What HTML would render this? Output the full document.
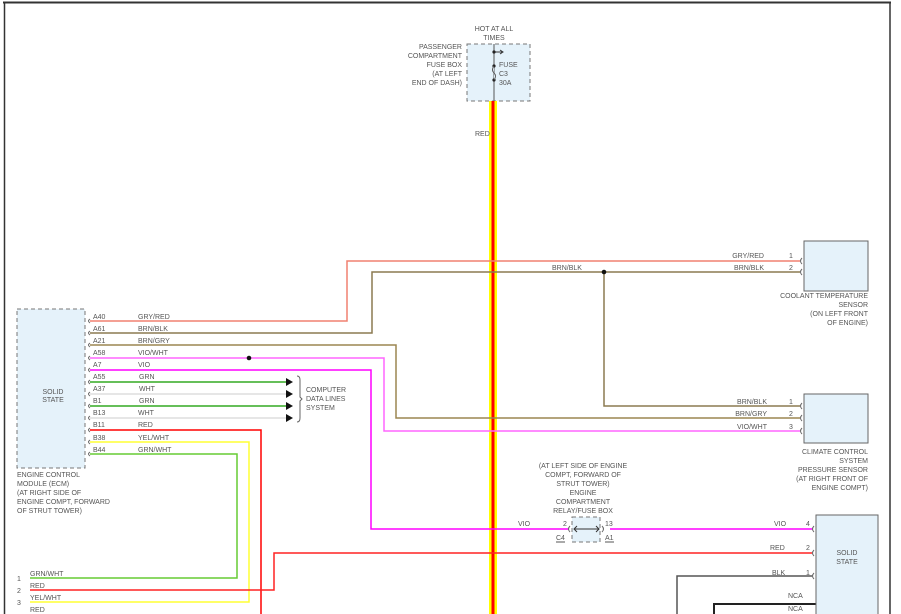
<!DOCTYPE html>
<html><head><style>
html,body{margin:0;padding:0;background:#fff;}
svg{display:block;}
text{font-family:"Liberation Sans",sans-serif;font-size:7px;fill:#555;}
</style></head><body>
<svg width="901" height="614" viewBox="0 0 901 614" xmlns="http://www.w3.org/2000/svg">
<rect x="0" y="0" width="901" height="614" fill="#fff"/>
<line x1="3" y1="2.5" x2="891" y2="2.5" stroke="#333" stroke-width="2"/>
<line x1="4.5" y1="2" x2="4.5" y2="614" stroke="#333" stroke-width="1.5"/>
<line x1="890" y1="2" x2="890" y2="614" stroke="#333" stroke-width="1.5"/>

<!-- fuse box -->
<rect x="467" y="44" width="63" height="57" fill="#e5f2fa" stroke="#777" stroke-dasharray="4,3"/>
<line x1="494" y1="44" x2="494" y2="101" stroke="#555"/>
<path d="M494 52 h8 M500 50 l3 2 l-3 2" stroke="#333" fill="none"/>
<circle cx="494" cy="52" r="1.6" fill="#222"/><circle cx="494" cy="66" r="1.6" fill="#222"/><circle cx="494" cy="80" r="1.6" fill="#222"/>
<path d="M494 66 q-3 4 0 7 q3 3 0 7" stroke="#555" fill="#e5f2fa"/>
<text x="494" y="31" text-anchor="middle">HOT AT ALL</text>
<text x="494" y="40" text-anchor="middle">TIMES</text>
<text x="462" y="49" text-anchor="end">PASSENGER</text>
<text x="462" y="58" text-anchor="end">COMPARTMENT</text>
<text x="462" y="67" text-anchor="end">FUSE BOX</text>
<text x="462" y="76" text-anchor="end">(AT LEFT</text>
<text x="462" y="85" text-anchor="end">END OF DASH)</text>
<text x="499" y="67">FUSE</text><text x="499" y="76">C3</text><text x="499" y="85">30A</text>
<line x1="493" y1="101" x2="493" y2="614" stroke="#ffff00" stroke-width="8"/>
<line x1="493" y1="101" x2="493" y2="614" stroke="#ff0000" stroke-width="3"/>
<text x="475" y="136">RED</text>

<!-- ECM -->
<rect x="17" y="309" width="68" height="159" fill="#e5f2fa" stroke="#777" stroke-dasharray="4,3"/>
<text x="53" y="394" text-anchor="middle">SOLID</text>
<text x="53" y="402" text-anchor="middle">STATE</text>
<text x="17" y="477">ENGINE CONTROL</text>
<text x="17" y="486">MODULE (ECM)</text>
<text x="17" y="495">(AT RIGHT SIDE OF</text>
<text x="17" y="504">ENGINE COMPT, FORWARD</text>
<text x="17" y="513">OF STRUT TOWER)</text>

<g fill="none" stroke-width="1.5">
<path d="M90 321 H347 V261 H800" stroke="#f08070"/>
<path d="M90 333 H372 V272 H800" stroke="#8b7a50"/>
<path d="M604 272 V406 H800" stroke="#8b7a50"/>
<path d="M90 345 H396 V418 H800" stroke="#9b8550"/>
<path d="M90 358 H384 V431 H800" stroke="#ff66ff"/>
<path d="M90 370 H371 V529 H569" stroke="#ff00ff"/>
<path d="M610 529 H812" stroke="#ff00ff"/>
<path d="M90 382 H287" stroke="#33aa22"/>
<path d="M90 394 H287" stroke="#ddd"/>
<path d="M90 406 H287" stroke="#33aa22"/>
<path d="M90 418 H287" stroke="#ddd"/>
<path d="M90 430 H261 V614" stroke="#ff0000"/>
<path d="M90 442 H249 V602 H30" stroke="#ffff33"/>
<path d="M90 454 H237 V578 H30" stroke="#66cc33"/>
<path d="M30 590 H274 V553 H812" stroke="#ff2222"/>
<path d="M812 576 H677 V614" stroke="#555"/>
<path d="M816 604 H714 V614" stroke="#222" stroke-width="2"/>
</g>
<g fill="#111">
<path d="M286 378 l7 4 l-7 4z"/><path d="M286 390 l7 4 l-7 4z"/><path d="M286 402 l7 4 l-7 4z"/><path d="M286 414 l7 4 l-7 4z"/>
<circle cx="249" cy="358" r="2.3"/><circle cx="604" cy="272" r="2.3"/>
</g>
<path d="M297 376 q3 0 3 4 v17 l2 2 l-2 2 v17 q0 4 -3 4" stroke="#666" fill="none"/>
<text x="306" y="392">COMPUTER</text><text x="306" y="401">DATA LINES</text><text x="306" y="410">SYSTEM</text>
<g stroke="#666" fill="none">
<path d="M90 319 q-3 2 0 4 M90 331 q-3 2 0 4 M90 343 q-3 2 0 4 M90 356 q-3 2 0 4 M90 368 q-3 2 0 4 M90 380 q-3 2 0 4 M90 392 q-3 2 0 4 M90 404 q-3 2 0 4 M90 416 q-3 2 0 4 M90 428 q-3 2 0 4 M90 440 q-3 2 0 4 M90 452 q-3 2 0 4"/>
<path d="M802 258 q-3 3 0 6 M802 269 q-3 3 0 6 M802 403 q-3 3 0 6 M802 415 q-3 3 0 6 M802 428 q-3 3 0 6 M814 526 q-3 3 0 6 M814 550 q-3 3 0 6 M814 573 q-3 3 0 6"/>
</g>
<g>
<text x="93" y="319">A40</text><text x="138" y="319">GRY/RED</text>
<text x="93" y="331">A61</text><text x="138" y="331">BRN/BLK</text>
<text x="93" y="343">A21</text><text x="138" y="343">BRN/GRY</text>
<text x="93" y="355">A58</text><text x="138" y="355">VIO/WHT</text>
<text x="93" y="367">A7</text><text x="138" y="367">VIO</text>
<text x="93" y="379">A55</text><text x="139" y="379">GRN</text>
<text x="93" y="391">A37</text><text x="139" y="391">WHT</text>
<text x="93" y="403">B1</text><text x="139" y="403">GRN</text>
<text x="93" y="415">B13</text><text x="138" y="415">WHT</text>
<text x="93" y="427">B11</text><text x="138" y="427">RED</text>
<text x="93" y="440">B38</text><text x="138" y="440">YEL/WHT</text>
<text x="93" y="452">B44</text><text x="138" y="452">GRN/WHT</text>
</g>

<!-- coolant sensor -->
<rect x="804" y="241" width="64" height="50" fill="#e5f2fa" stroke="#666"/>
<text x="764" y="258" text-anchor="end">GRY/RED</text><text x="789" y="258">1</text>
<text x="552" y="270">BRN/BLK</text>
<text x="764" y="270" text-anchor="end">BRN/BLK</text><text x="789" y="270">2</text>
<text x="868" y="298" text-anchor="end">COOLANT TEMPERATURE</text>
<text x="868" y="307" text-anchor="end">SENSOR</text>
<text x="868" y="316" text-anchor="end">(ON LEFT FRONT</text>
<text x="868" y="325" text-anchor="end">OF ENGINE)</text>

<!-- climate -->
<rect x="804" y="394" width="64" height="49" fill="#e5f2fa" stroke="#666"/>
<text x="767" y="404" text-anchor="end">BRN/BLK</text><text x="789" y="404">1</text>
<text x="767" y="416" text-anchor="end">BRN/GRY</text><text x="789" y="416">2</text>
<text x="767" y="429" text-anchor="end">VIO/WHT</text><text x="789" y="429">3</text>
<text x="868" y="454" text-anchor="end">CLIMATE CONTROL</text>
<text x="868" y="463" text-anchor="end">SYSTEM</text>
<text x="868" y="472" text-anchor="end">PRESSURE SENSOR</text>
<text x="868" y="481" text-anchor="end">(AT RIGHT FRONT OF</text>
<text x="868" y="490" text-anchor="end">ENGINE COMPT)</text>

<!-- relay box -->
<text x="583" y="468" text-anchor="middle">(AT LEFT SIDE OF ENGINE</text>
<text x="583" y="477" text-anchor="middle">COMPT, FORWARD OF</text>
<text x="583" y="486" text-anchor="middle">STRUT TOWER)</text>
<text x="583" y="495" text-anchor="middle">ENGINE</text>
<text x="583" y="504" text-anchor="middle">COMPARTMENT</text>
<text x="583" y="513" text-anchor="middle">RELAY/FUSE BOX</text>
<rect x="572" y="517" width="28" height="25" fill="#e5f2fa" stroke="#777" stroke-dasharray="4,3"/>
<path d="M574 529 h25 M577 526 l-3 3 l3 3 M596 526 l3 3 l-3 3" stroke="#333" fill="none"/>
<path d="M570 526 q-3 3 0 6 M602 526 q3 3 0 6" stroke="#666" fill="none"/>
<text x="563" y="526">2</text><text x="605" y="526">13</text>
<text x="556" y="540">C4</text><text x="605" y="540">A1</text>
<path d="M556 542 h9 M605 542 h9" stroke="#555"/>
<text x="518" y="526">VIO</text>
<text x="774" y="526">VIO</text><text x="806" y="526">4</text>
<text x="770" y="550">RED</text><text x="806" y="550">2</text>
<text x="772" y="575">BLK</text><text x="806" y="575">1</text>
<text x="788" y="598">NCA</text><text x="788" y="611">NCA</text>

<!-- bottom right module -->
<rect x="816" y="515" width="62" height="105" fill="#e5f2fa" stroke="#666"/>
<text x="847" y="555" text-anchor="middle">SOLID</text>
<text x="847" y="564" text-anchor="middle">STATE</text>

<!-- bottom left -->
<text x="17" y="581">1</text><text x="30" y="576">GRN/WHT</text>
<text x="17" y="593">2</text><text x="30" y="588">RED</text>
<text x="17" y="605">3</text><text x="30" y="600">YEL/WHT</text>
<text x="30" y="612">RED</text>
</svg>
</body></html>
